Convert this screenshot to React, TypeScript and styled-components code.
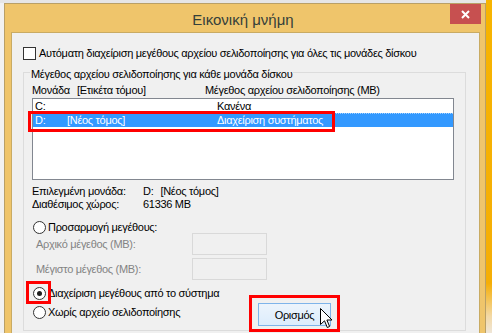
import React from "react";
import styled, { createGlobalStyle } from "styled-components";

const Global = createGlobalStyle`
  html, body { margin: 0; padding: 0; }
  body {
    font-family: "Liberation Sans", Arial, sans-serif;
    font-size: 11px;
    letter-spacing: -0.3px;
    color: #000;
  }
  * { box-sizing: border-box; }
`;

const Screen = styled.div`
  position: relative;
  width: 492px;
  height: 333px;
  overflow: hidden;
  display: flex;
  align-items: flex-start;
  background: linear-gradient(#e6e6e6 0 3px, #f2f2f2 3px);
`;

const Win = styled.div`
  flex: none;
  margin: 3px 0 0 4px;
  width: 482px;
  height: 345px;
  border: 1px solid #b9a067;
  background: #efc56b;
  display: flex;
  flex-direction: column;
`;

const OrangeStrip = styled.div`
  flex: 1;
  align-self: stretch;
  background: linear-gradient(#f7b400 0, #f5ae06 85%, #f3d9a6 95%, #efe6d8 100%);
`;

const TitleBar = styled.div`
  display: grid;
  grid-template-columns: 1fr auto 1fr;
  height: 28px;
  padding-right: 4px;
`;

const Title = styled.div`
  grid-column: 2;
  font-size: 15px;
  letter-spacing: 0;
  line-height: 18px;
  padding-top: 7px;
  color: #35403a;
`;

const Close = styled.div`
  grid-column: 3;
  justify-self: end;
  width: 31px;
  height: 20px;
  background: #c75050;
  display: flex;
  align-items: center;
  justify-content: center;
`;

const Body = styled.div`
  flex: 1;
  margin: 0 5px 0 6px;
  border: 1px solid #c9ab63;
  background: #f0f0f0;
  padding: 14px 0 0 11px;
`;

const CheckRow = styled.div`
  display: flex;
  align-items: center;
  gap: 3px;
  height: 13px;
  line-height: 13px;
`;

const CheckBox = styled.span`
  width: 13px;
  height: 13px;
  border: 1px solid #333;
  background: #fff;
`;

const Group = styled.fieldset`
  margin: 4px 0 0 0;
  width: 443px;
  min-width: 0;
  border: 1px solid #dcdcdc;
  padding: 0 0 4px 8px;
`;

const Legend = styled.legend`
  margin-left: -2px;
  padding: 4px 1px 0 1px;
  line-height: 13px;
`;

const HeaderRow = styled.div`
  display: grid;
  grid-template-columns: 45px 128px 1fr;
  margin-top: 3px;
  line-height: 13px;
`;

const List = styled.div`
  margin-top: 1px;
  width: 422px;
  height: 82px;
  border: 1px solid #828790;
  background: #fff;
`;

const Row = styled.div<{ $selected?: boolean }>`
  display: grid;
  grid-template-columns: 32px 150px 1fr;
  height: 14px;
  line-height: 13px;
  padding-left: 2px;
  background: ${(p) => (p.$selected ? "#3399ff" : "transparent")};
  color: ${(p) => (p.$selected ? "#fff" : "#000")};
  border-top: 1px dotted ${(p) => (p.$selected ? "rgba(255,255,255,0.55)" : "transparent")};
`;

const Info = styled.div`
  display: grid;
  grid-template-columns: 111px 1fr;
  margin-top: 5px;
  line-height: 13px;
`;

const Vol = styled.span`
  margin-left: 7px;
`;

const RadioRow = styled.div<{ $top: number }>`
  display: flex;
  align-items: center;
  gap: 2px;
  height: 14px;
  margin-top: ${(p) => p.$top}px;
  margin-left: 1px;
`;

const Radio = styled.span<{ $on?: boolean }>`
  width: 13px;
  height: 13px;
  border-radius: 50%;
  border: 1px solid #333;
  background: #fff;
  display: flex;
  align-items: center;
  justify-content: center;
  &::after {
    content: "";
    display: ${(p) => (p.$on ? "block" : "none")};
    width: 5px;
    height: 5px;
    border-radius: 50%;
    background: #1e1e1e;
  }
`;

const FieldRow = styled.div<{ $top: number }>`
  display: grid;
  grid-template-columns: 160px 75px;
  align-items: center;
  height: 22px;
  margin-top: ${(p) => p.$top}px;
`;

const FieldLabel = styled.span`
  padding-left: 4px;
  color: #838383;
`;

const FieldBox = styled.span`
  height: 22px;
  border: 1px solid #d9d9d9;
  background: #f0f0f0;
`;

const Bottom = styled.div`
  display: grid;
  grid-template-columns: 226px auto;
  align-items: start;
  margin-top: 6px;
`;

const Radios = styled.div`
  display: flex;
  flex-direction: column;
`;

const Button = styled.div`
  margin-top: 17px;
  width: 73px;
  height: 23px;
  border: 1px solid #7eb4ea;
  background: linear-gradient(#ecf4fc, #dcecfc);
  display: flex;
  align-items: center;
  justify-content: center;
`;

const Mark = styled.div<{ $x: number; $y: number; $w: number; $h: number }>`
  position: absolute;
  left: ${(p) => p.$x}px;
  top: ${(p) => p.$y}px;
  width: ${(p) => p.$w}px;
  height: ${(p) => p.$h}px;
  border: 3px solid #f00;
  pointer-events: none;
`;

const Cursor = styled.svg`
  position: absolute;
  left: 320px;
  top: 308px;
`;

export default function App() {
  return (
    <>
      <Global />
      <Screen>
        <Win>
          <TitleBar>
            <Title>Εικονική μνήμη</Title>
            <Close>
              <svg width="9" height="9" viewBox="0 0 9 9">
                <path d="M1 1 L8 8 M8 1 L1 8" stroke="#fff" strokeWidth="2" />
              </svg>
            </Close>
          </TitleBar>
          <Body>
            <CheckRow>
              <CheckBox />
              <span>Αυτόματη διαχείριση μεγέθους αρχείου σελιδοποίησης για όλες τις μονάδες δίσκου</span>
            </CheckRow>
            <Group>
              <Legend>Μέγεθος αρχείου σελιδοποίησης για κάθε μονάδα δίσκου</Legend>
              <HeaderRow>
                <span>Μονάδα</span>
                <span>[Ετικέτα τόμου]</span>
                <span>Μέγεθος αρχείου σελιδοποίησης (MB)</span>
              </HeaderRow>
              <List>
                <Row>
                  <span>C:</span>
                  <span></span>
                  <span>Κανένα</span>
                </Row>
                <Row $selected>
                  <span>D:</span>
                  <span>[Νέος τόμος]</span>
                  <span>Διαχείριση συστήματος</span>
                </Row>
              </List>
              <Info>
                <span>Επιλεγμένη μονάδα:</span>
                <span>
                  D:<Vol>[Νέος τόμος]</Vol>
                </span>
                <span>Διαθέσιμος χώρος:</span>
                <span>61336 MB</span>
              </Info>
              <RadioRow $top={9}>
                <Radio />
                <span>Προσαρμογή μεγέθους:</span>
              </RadioRow>
              <FieldRow $top={-1}>
                <FieldLabel>Αρχικό μέγεθος (MB):</FieldLabel>
                <FieldBox />
              </FieldRow>
              <FieldRow $top={3}>
                <FieldLabel>Μέγιστο μέγεθος (MB):</FieldLabel>
                <FieldBox />
              </FieldRow>
              <Bottom>
                <Radios>
                  <RadioRow $top={0}>
                    <Radio $on />
                    <span>Διαχείριση μεγέθους από το σύστημα</span>
                  </RadioRow>
                  <RadioRow $top={5}>
                    <Radio />
                    <span>Χωρίς αρχείο σελιδοποίησης</span>
                  </RadioRow>
                </Radios>
                <Button>Ορισμός</Button>
              </Bottom>
            </Group>
          </Body>
        </Win>
        <OrangeStrip />
        <Mark $x={28} $y={111} $w={307} $h={21} />
        <Mark $x={26} $y={281} $w={25} $h={23} />
        <Mark $x={249} $y={295} $w={91} $h={37} />
        <Cursor width="13" height="21" viewBox="0 0 13 21">
          <path
            d="M0.5 0.5 L0.5 16.5 L4.5 12.8 L7.3 19.5 L9.6 18.5 L6.9 12 L12 12 Z"
            fill="#fff"
            stroke="#000"
            strokeWidth="1"
            strokeLinejoin="round"
          />
        </Cursor>
      </Screen>
    </>
  );
}
